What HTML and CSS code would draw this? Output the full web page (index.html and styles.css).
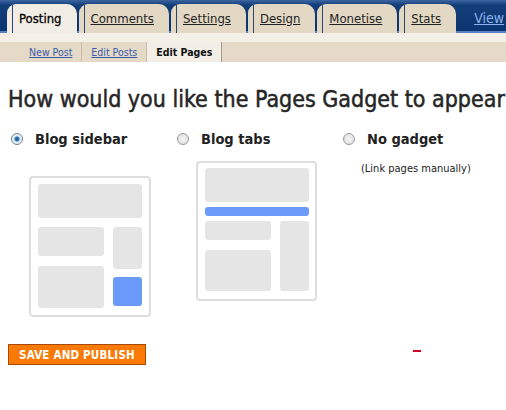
FILE: index.html
```html
<!DOCTYPE html>
<html lang="en">
<head>
<meta charset="utf-8">
<title>Edit Pages</title>
<link rel="stylesheet" href="styles.css">
</head>
<body>
<header class="topnav">
  <a class="tab active">Posting</a>
  <a class="tab" href="#">Comments</a>
  <a class="tab" href="#">Settings</a>
  <a class="tab" href="#">Design</a>
  <a class="tab" href="#">Monetise</a>
  <a class="tab" href="#">Stats</a>
  <a class="view" href="#">View</a>
</header>
<nav class="subnav">
  <a class="sub" href="#">New Post</a>
  <a class="sub" href="#">Edit Posts</a>
  <span class="sub current">Edit Pages</span>
</nav>
<main class="content">
  <h1 class="title">How would you like the Pages Gadget to appear</h1>
  <div class="options">
    <div class="option">
      <label class="opt-label"><span class="radio checked"></span>Blog sidebar</label>
      <div class="mock mock-sidebar">
        <div class="blk blk-top"></div>
        <div class="cols">
          <div class="col col-main">
            <div class="blk h29"></div>
            <div class="blk h42"></div>
          </div>
          <div class="col col-side">
            <div class="blk h42"></div>
            <div class="blk blue h29"></div>
          </div>
        </div>
      </div>
    </div>
    <div class="option">
      <label class="opt-label"><span class="radio"></span>Blog tabs</label>
      <div class="mock mock-tabs">
        <div class="blk blk-top"></div>
        <div class="blk blue bar"></div>
        <div class="cols">
          <div class="col col-main">
            <div class="blk h19"></div>
            <div class="blk h41"></div>
          </div>
          <div class="col col-side">
            <div class="blk h70"></div>
          </div>
        </div>
      </div>
    </div>
    <div class="option">
      <label class="opt-label"><span class="radio"></span>No gadget</label>
      <p class="note">(Link pages manually)</p>
    </div>
  </div>
  <span class="dash"></span>
  <button class="save">SAVE AND PUBLISH</button>
</main>
</body>
</html>
```

FILE: styles.css
```css
html, body {
  margin: 0;
  padding: 0;
  background: #ffffff;
}
body {
  width: 506px;
  height: 410px;
  overflow: hidden;
  font-family: "DejaVu Sans Condensed", "DejaVu Sans", sans-serif;
  font-stretch: condensed;
  color: #222;
}

/* top tab bar */
.topnav {
  display: flex;
  align-items: flex-end;
  gap: 2px;
  height: 31px;
  padding-left: 7px;
  background: linear-gradient(#3d66a2 0, #123e79 5px, #0b3570 100%);
  border-bottom: 2px solid #5c81c2;
  white-space: nowrap;
}
.tab {
  position: relative;
  display: flex;
  align-items: center;
  flex: none;
  height: 29px;
  margin-bottom: -2px;
  padding: 0 15px 0 12px;
  background: #e3d8c4;
  border-radius: 9px 10px 0 0;
  font-size: 13px;
  color: #222;
  text-decoration: underline;
}
.tab::before {
  content: "";
  position: absolute;
  left: 5px;
  top: 1px;
  bottom: 0;
  width: 1px;
  background: #2a4572;
}
.tab.active {
  background: #f2ede4;
  color: #000;
  text-decoration: none;
  -webkit-text-stroke: 0.3px #000;
}
.view {
  flex: none;
  align-self: center;
  margin: 4px 0 0 16px;
  font-size: 14px;
  color: #8fb1ea;
  text-decoration: underline;
}

/* sub navigation */
.subnav {
  display: flex;
  height: 20px;
  padding-left: 20px;
  border-top: 9px solid #f4f0e8;
  background: #e4dac7;
}
.sub {
  display: flex;
  align-items: center;
  padding: 0 9px;
  border-right: 1px solid #c9bba3;
  font-size: 10.5px;
  color: #3b5cae;
  text-decoration: underline;
}
.sub.current {
  background: #f3eee6;
  border-right-color: #a89a84;
  color: #111;
  font-weight: bold;
  text-decoration: none;
}

/* content */
.content {
  position: relative;
  padding: 0 8px;
}
.title {
  margin: 24px 0 0;
  font-size: 23px;
  line-height: 27px;
  font-weight: normal;
  color: #262626;
  white-space: nowrap;
  -webkit-text-stroke: 0.5px #262626;
}
.options {
  display: flex;
  margin: 17px 0 0 3px;
}
.option {
  flex: none;
  width: 166px;
}
.opt-label {
  display: flex;
  align-items: center;
  gap: 12px;
  height: 18px;
  font-size: 14.5px;
  font-weight: bold;
  color: #222;
}
.radio {
  box-sizing: border-box;
  flex: none;
  width: 12px;
  height: 12px;
  border-radius: 50%;
  border: 1px solid #9a9a9a;
  background: radial-gradient(circle, #f4f4f4 0, #dcdcdc 100%);
}
.radio.checked {
  border-color: #6f7f90;
  background: radial-gradient(circle, #1c5a92 0, #2f77b4 2px, #cfe2f3 3px, #f6f6f6 5px);
}
.note {
  margin: 14px 0 0 18px;
  font-size: 11px;
  line-height: 14px;
  color: #222;
}

/* layout mock-ups */
.mock {
  box-sizing: border-box;
  width: 122px;
  border: 2px solid #dedede;
  border-radius: 4px;
  background: #fff;
}
.mock-sidebar {
  margin: 28px 0 0 18px;
  padding: 6px 7px 7px 7px;
}
.mock-tabs {
  margin: 13px 0 0 19px;
  padding: 5px 6px 8px 7px;
  width: 121px;
}
.blk {
  background: #e5e5e5;
  border-radius: 3px;
}
.blk.blue {
  background: #6a9bfb;
}
.blk-top {
  height: 34px;
}
.mock-sidebar .cols {
  margin-top: 9px;
}
.mock-tabs .bar {
  height: 9px;
  margin-top: 5px;
}
.mock-tabs .cols {
  margin-top: 5px;
}
.cols {
  display: flex;
  gap: 9px;
}
.col {
  display: flex;
  flex-direction: column;
}
.col-main {
  width: 66px;
  gap: 10px;
}
.col-side {
  width: 29px;
  gap: 8px;
}
.h19 { height: 19px; }
.h29 { height: 29px; }
.h41 { height: 41px; }
.h42 { height: 42px; }
.h70 { height: 70px; }

.dash {
  position: absolute;
  left: 413px;
  top: 264px;
  width: 8px;
  height: 2px;
  background: #d4002a;
}

.save {
  display: block;
  margin-top: 27px;
  height: 21px;
  padding: 0;
  width: 138px;
  border: 1px solid #a84a00;
  background: #fb7a05;
  color: #fff;
  font-family: "DejaVu Sans Condensed", "DejaVu Sans", sans-serif;
  font-stretch: condensed;
  font-size: 11.5px;
  font-weight: bold;
  letter-spacing: 0.2px;
}
```
